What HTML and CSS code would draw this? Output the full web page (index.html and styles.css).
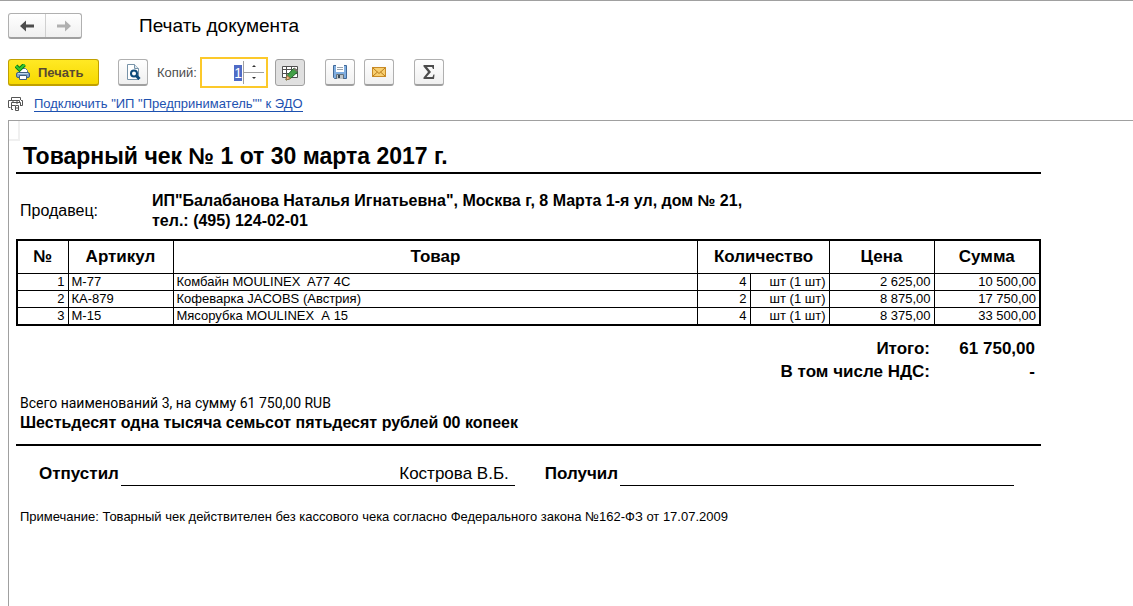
FILE: index.html
```html
<!DOCTYPE html>
<html lang="ru">
<head>
    <meta charset="UTF-8">
    <meta name="viewport" content="width=device-width, initial-scale=1.0">
    <title>Печать документа</title>
    <link rel="stylesheet" href="styles.css">
</head>
<body>
    <!-- Заголовок окна -->
    <header class="header">
        <div class="nav">
            <button type="button" class="nav-btn" aria-label="Назад">
                <svg width="16" height="12" viewBox="0 0 16 12"><path d="M1 6L7 .5V4.500H15V7.500H7V11.500Z" fill="#4d4d4d"/></svg>
            </button>
            <button type="button" class="nav-btn" aria-label="Вперед">
                <svg width="16" height="12" viewBox="0 0 16 12"><path d="M15 6L9 .5V4.500H1V7.500H9V11.500Z" fill="#b0b0b0"/></svg>
            </button>
        </div>
        <h1 class="window-title">Печать документа</h1>
    </header>

    <!-- Панель команд -->
    <div class="toolbar">
        <button type="button" class="btn btn-print">
            <svg width="16" height="16" viewBox="0 0 16 16">
                <path d="M4.500 9V4.500H10.500L12.500 6.500V9" fill="#fff" stroke="#5a7896"/>
                <rect x="1.500" y="8.500" width="13" height="5" rx="1.500" fill="#7da3c8" stroke="#41607f"/>
                <path d="M3 9.500H13" stroke="#c3d9ec"/>
                <path d="M4.500 11.500H11.500V15.500H4.500Z" fill="#fff" stroke="#41607f"/>
                <path d="M1 2L4.500 5.500L9.500 .5" fill="none" stroke="#0c7a13" stroke-width="4"/>
                <path d="M1 2L4.500 5.500L9.500 .5" fill="none" stroke="#35c832" stroke-width="2"/>
            </svg>
            Печать
        </button>
        <button type="button" class="btn btn-icon" aria-label="Предварительный просмотр">
            <svg width="16" height="16" viewBox="0 0 16 16">
                <path d="M2.500 .5H9.500L13.500 4.500V15.500H2.500Z" fill="#fff" stroke="#7793a8"/>
                <path d="M9.500 .5V4.500H13.500" fill="#dce6ee" stroke="#7793a8"/>
                <circle cx="9" cy="9.500" r="3" fill="#fff" stroke="#0d4a79" stroke-width="2"/>
                <path d="M11 11.500L14.500 15" stroke="#0d4a79" stroke-width="3"/>
            </svg>
        </button>
        <div class="copies">
            <label for="copies">Копий:</label>
            <div class="spin">
                <input type="text" inputmode="numeric" id="copies" value="1">
                <div class="spin-btns">
                    <button type="button" aria-label="Больше"><svg width="4" height="2" viewBox="0 0 4 2"><path d="M0 2L2 0L4 2Z" fill="#333"/></svg></button>
                    <button type="button" aria-label="Меньше"><svg width="4" height="2" viewBox="0 0 4 2"><path d="M0 0L2 2L4 0Z" fill="#333"/></svg></button>
                </div>
            </div>
        </div>
        <button type="button" class="btn btn-icon pressed" aria-pressed="true" aria-label="Редактирование">
            <svg width="18" height="16" viewBox="0 0 18 16">
                <path d="M1.500 1.500H16.500V12.500H1.500ZM1.500 4.500H16.500M1.500 8.500H16.500M5.500 1.500V12.500M10.500 1.500V12.500" fill="#fff" stroke="#505050"/>
                <path d="M5 15L6 10.500L12.500 3.500L16.500 7L9.500 13.500Z" fill="#43a047" stroke="#23682a"/>
                <path d="M5 15L6 10.500L9.500 13.500Z" fill="#f2c08c" stroke="#9a6a3c"/>
                <path d="M12 4L13.500 2.500L17 5.500L16 7Z" fill="#78756b"/>
            </svg>
        </button>
        <button type="button" class="btn btn-icon gap-before" aria-label="Сохранить">
            <svg width="16" height="16" viewBox="0 0 16 16">
                <path d="M1.500 1.500H14.500V14.500H2.500L1.500 13.500Z" fill="#80aee0" stroke="#416998"/>
                <rect x="4" y="1" width="8" height="7" fill="#fff"/>
                <path d="M5 3.500H11M5 5.500H11" stroke="#98a2ac"/>
                <rect x="4" y="10" width="8" height="5" fill="#bfc4c6"/>
                <path d="M4.500 15V10.500H11.500V15" fill="none" stroke="#62717d"/>
                <rect x="6" y="11" width="2" height="3" fill="#394a59"/>
            </svg>
        </button>
        <button type="button" class="btn btn-icon" aria-label="Отправить по почте">
            <svg width="16" height="16" viewBox="0 0 16 16">
                <rect x="1.500" y="3.500" width="13" height="9" fill="#f8cf70" stroke="#c88a25"/>
                <path d="M2 4L8 9.500L14 4M2 12L6.500 8M14 12L9.500 8" fill="none" stroke="#b97d1c"/>
            </svg>
        </button>
        <button type="button" class="btn btn-icon gap-before" aria-label="Сумма">
            <svg width="16" height="16" viewBox="0 0 16 16">
                <path d="M2.500 1H13V5H12L11 3H6L10 8L5.500 13H11.500L12.500 10.500H13.500L13 15H2.500V13.500L7 8L2.500 2.500Z" fill="#4d4d4d"/>
            </svg>
        </button>
    </div>

    <div class="edo">
        <svg width="16" height="16" viewBox="0 0 16 16" fill="none" stroke="#555">
            <path d="M3.500 4V1.500H12.500V4M2.500 11.500H.5V4.500H11.500V6M13 4.500H14.500V9.500H12M3.500 13.500V6.500H12.500V9M3.500 9.500H7M5 13.500H3.500M5 4.500V7M9 4V8M7.500 9.500H10.500V14.500H7.500ZM7.500 12H10.500"/>
        </svg>
        <a href="#">Подключить "ИП "Предприниматель"" к ЭДО</a>
    </div>

    <!-- Печатная форма -->
    <main class="sheet">
        <div class="cell-mark"></div>
        <article class="receipt">
            <h2 class="receipt-title">Товарный чек № 1 от 30 марта 2017 г.</h2>

            <div class="seller">
                <span>Продавец:</span>
                <strong>ИП"Балабанова Наталья Игнатьевна", Москва г, 8 Марта 1-я ул, дом № 21,<br>тел.: (495) 124-02-01</strong>
            </div>

            <table class="goods">
                <colgroup>
                    <col class="col-num">
                    <col class="col-sum">
                    <col>
                    <col class="col-qty">
                    <col class="col-unit">
                    <col class="col-sum">
                    <col class="col-total">
                </colgroup>
                <thead>
                    <tr>
                        <th>№</th>
                        <th>Артикул</th>
                        <th>Товар</th>
                        <th colspan="2">Количество</th>
                        <th>Цена</th>
                        <th>Сумма</th>
                    </tr>
                </thead>
                <tbody>
                    <tr>
                        <td class="num">1</td>
                        <td>М-77</td>
                        <td>Комбайн MOULINEX  A77 4С</td>
                        <td class="num qty">4</td>
                        <td class="num">шт (1 шт)</td>
                        <td class="num">2 625,00</td>
                        <td class="num">10 500,00</td>
                    </tr>
                    <tr>
                        <td class="num">2</td>
                        <td>КА-879</td>
                        <td>Кофеварка JACOBS (Австрия)</td>
                        <td class="num qty">2</td>
                        <td class="num">шт (1 шт)</td>
                        <td class="num">8 875,00</td>
                        <td class="num">17 750,00</td>
                    </tr>
                    <tr>
                        <td class="num">3</td>
                        <td>М-15</td>
                        <td>Мясорубка MOULINEX  А 15</td>
                        <td class="num qty">4</td>
                        <td class="num">шт (1 шт)</td>
                        <td class="num">8 375,00</td>
                        <td class="num">33 500,00</td>
                    </tr>
                </tbody>
            </table>

            <dl class="totals">
                <dt>Итого:</dt>
                <dd>61 750,00</dd>
                <dt>В том числе НДС:</dt>
                <dd>-</dd>
            </dl>

            <div class="summary">
                <p class="summary-count">Всего наименований 3, на сумму 61 750,00 RUB</p>
                <p class="summary-words">Шестьдесят одна тысяча семьсот пятьдесят рублей 00 копеек</p>
            </div>

            <div class="signs">
                <strong>Отпустил</strong>
                <span class="sign-line">Кострова В.Б.</span>
                <strong class="sign-second">Получил</strong>
                <span class="sign-line"></span>
            </div>

            <p class="note">Примечание: Товарный чек действителен без кассового чека согласно Федерального закона №162-ФЗ от 17.07.2009</p>
        </article>
    </main>

    <script>
        // Сразу выделяем количество копий
        document.getElementById('copies').select();
    </script>
</body>
</html>
```

FILE: styles.css
```css
* {
    box-sizing: border-box;
}

body {
    display: flex;
    flex-direction: column;
    min-height: 100vh;
    margin: 0;
    border-top: 1px solid #a0a0a0;
    background-color: #fff;
    color: #000;
    font-family: "Liberation Sans", Arial, sans-serif;
    font-size: 13px;
}

button {
    padding: 0;
    border: none;
    background: none;
    font: inherit;
    cursor: pointer;
}

svg {
    display: block;
    flex: none;
}

/* Заголовок окна */
.header {
    display: flex;
    align-items: center;
    gap: 57px;
    padding: 12px 8px 0;
}

.nav {
    display: flex;
    height: 26px;
    border: 1px solid #b0b0b0;
    border-bottom: 2px solid #a0a0a0;
    border-radius: 3px;
    background: linear-gradient(#fff, #f0f0f0);
}

.nav-btn {
    display: flex;
    align-items: center;
    justify-content: center;
    width: 36px;
}

.nav-btn + .nav-btn {
    border-left: 1px solid #d0d0d0;
}

.window-title {
    margin: 0;
    font-size: 19px;
    font-weight: normal;
}

/* Панель команд */
.toolbar {
    display: flex;
    align-items: center;
    gap: 9px;
    height: 31px;
    margin-top: 18px;
    padding: 0 8px;
}

.btn {
    display: flex;
    align-items: center;
    justify-content: center;
    height: 27px;
    border: 1px solid #b0b0b0;
    border-bottom: 2px solid #a0a0a0;
    border-radius: 3px;
    background: linear-gradient(#fff, #f0f0f0);
}

.btn-icon {
    width: 30px;
}

.btn-print {
    justify-content: flex-start;
    gap: 7px;
    width: 91px;
    margin-right: 10px;
    padding-left: 6px;
    border-color: #c0a000;
    background: linear-gradient(#ffe924, #f7d900);
    color: #594a30;
    font-weight: bold;
}

.pressed {
    border-color: #a0a0a0;
    border-bottom-width: 1px;
    background: #e0e0e0;
}

.gap-before {
    margin-left: 11px;
}

.copies {
    display: flex;
    align-items: center;
    gap: 3px;
    margin-right: -2px;
    color: #4d4d4d;
}

.spin {
    display: flex;
    align-items: center;
    width: 68px;
    height: 31px;
    padding: 2px;
    border: 2px solid #fcc92a;
}

.spin input {
    flex: 1;
    width: 0;
    padding: 0 1px 0 0;
    border: none;
    outline: none;
    font: inherit;
    font-size: 14px;
    text-align: right;
}

.spin input::selection {
    background-color: #4f6bc6;
    color: #fff;
}

.spin-btns {
    display: grid;
    grid-template-rows: 1fr 1fr;
    width: 21px;
    height: 23px;
    border-left: 1px solid #a0a0a0;
}

.spin-btns button {
    display: flex;
    align-items: center;
    justify-content: center;
}

.spin-btns button:first-child {
    border-bottom: 1px solid #a0a0a0;
}

.edo {
    display: flex;
    align-items: center;
    gap: 10px;
    height: 32px;
    padding: 0 8px;
}

.edo a {
    border-bottom: 1px solid #1d51b0;
    color: #1d51b0;
    line-height: 14px;
    text-decoration: none;
}

/* Печатная форма */
.sheet {
    flex: 1;
    margin-left: 8px;
    border-top: 1px solid #a0a0a0;
    border-left: 1px solid #a0a0a0;
}

.cell-mark {
    width: 11px;
    height: 20px;
    border: solid #f0f0f0;
    border-width: 0 2px 2px 0;
}

.receipt {
    max-width: 1032px;
    padding-left: 7px;
}

.receipt-title {
    margin: 0;
    padding-left: 7px;
    border-bottom: 2px solid #000;
    font-size: 23px;
    line-height: 31px;
}

.seller {
    display: flex;
    align-items: center;
    gap: 54px;
    margin: 17px 0 8px;
    padding-left: 4px;
    font-size: 16px;
    line-height: 20px;
}

.goods {
    width: 100%;
    border: 2px solid #000;
    border-collapse: collapse;
    table-layout: fixed;
}

.goods th,
.goods td {
    padding: 0 3px;
    border: 1px solid #000;
    line-height: 16px;
}

.goods th {
    font-size: 17px;
    line-height: 32px;
}

.goods td {
    font-size: 13px;
    white-space: pre;
}

.goods .num {
    padding-right: 3px;
    text-align: right;
}

.goods .qty {
    padding-right: 4px;
}

.col-num {
    width: 51px;
}

.col-qty {
    width: 53px;
}

.col-unit {
    width: 78px;
}

.col-sum {
    width: 105px;
}

.col-total {
    width: 106px;
}

.totals {
    display: grid;
    grid-template-columns: 1fr 105px;
    margin: 11px 0 10px;
    padding-right: 6px;
    font-size: 17px;
    font-weight: bold;
    line-height: 23px;
    text-align: right;
}

.totals dd {
    margin: 0;
}

.summary {
    padding: 0 4px 11px;
    border-bottom: 2px solid #000;
}

.summary p {
    margin: 0;
    line-height: 20px;
}

.summary-count {
    font-family: Roboto, "Liberation Sans", sans-serif;
    font-size: 14px;
}

.summary-words {
    font-size: 16px;
    font-weight: bold;
}

.signs {
    display: flex;
    padding: 17px 27px 0 23px;
    font-size: 17px;
    line-height: 22px;
}

.sign-line {
    flex: 1;
    margin-left: 2px;
    padding-right: 6px;
    border-bottom: 1px solid #000;
    text-align: right;
}

.sign-second {
    margin-left: 30px;
}

.note {
    margin: 23px 0 0;
    padding-left: 4px;
    line-height: 16px;
}
```
